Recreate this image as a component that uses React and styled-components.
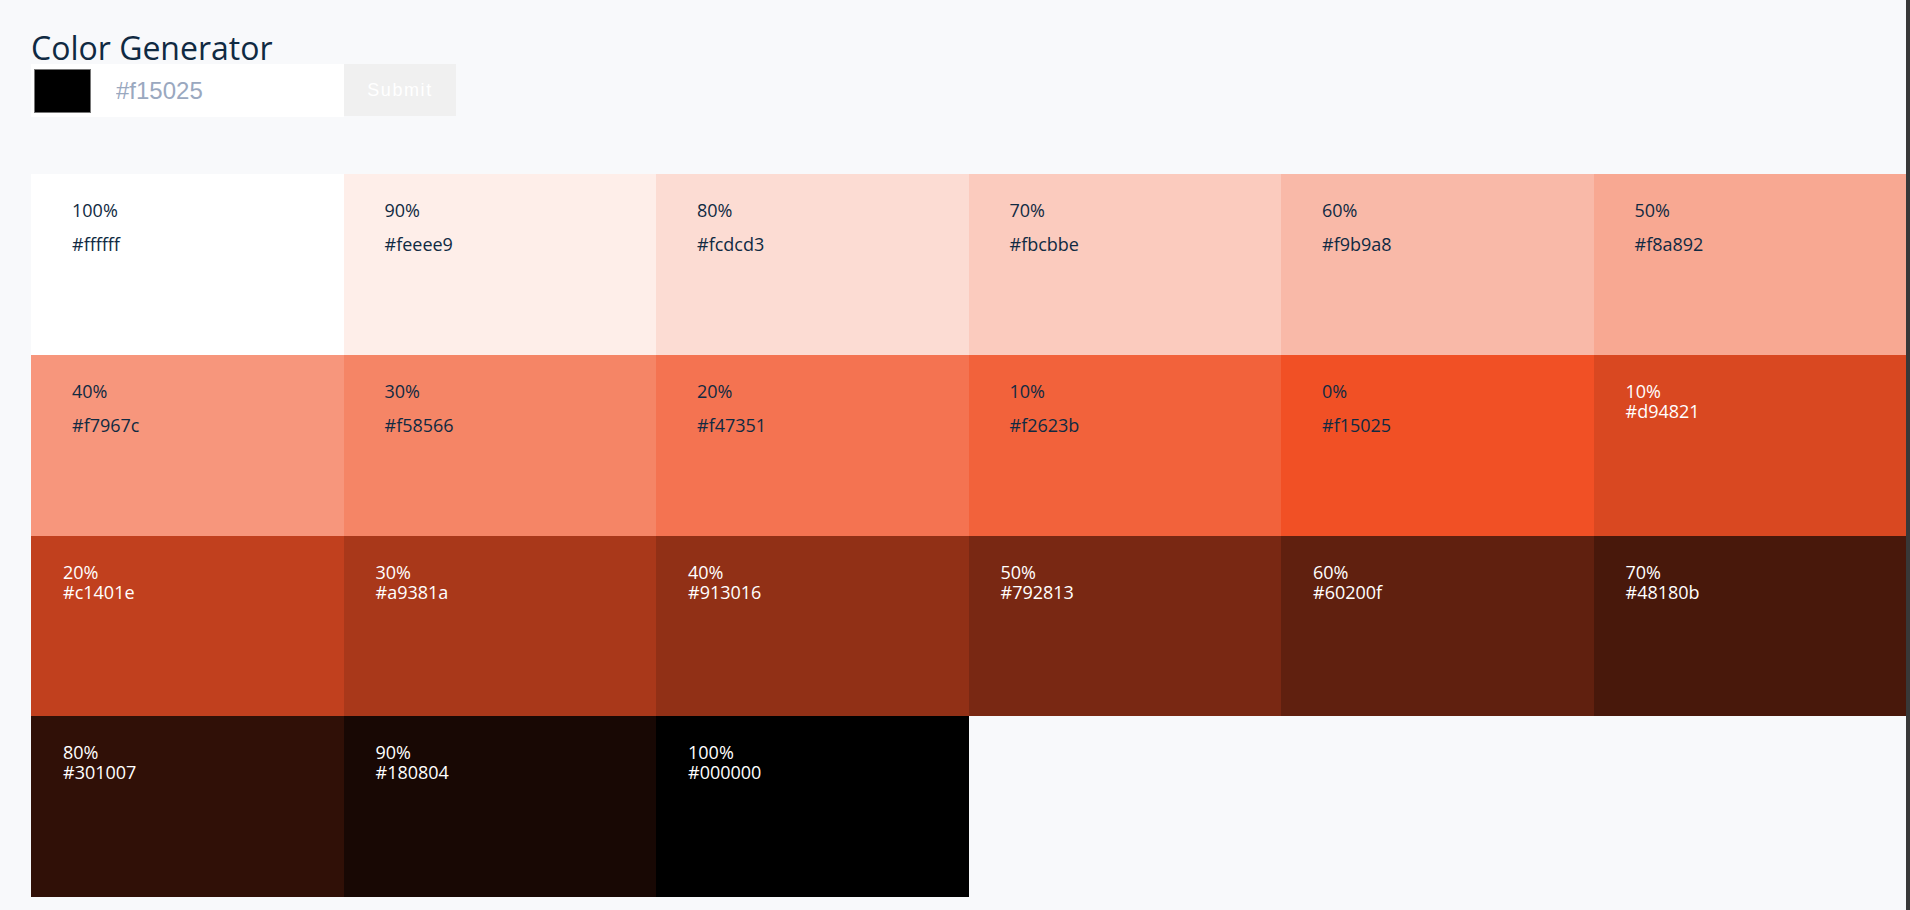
import React from 'react'
import styled, { createGlobalStyle } from 'styled-components'

const GlobalStyle = createGlobalStyle`
  html, body {
    margin: 0;
    padding: 0;
    background: #f8f9fb;
    font-family: "Open Sans", "Noto Sans", sans-serif;
    color: #102a42;
  }
  * { box-sizing: border-box; }
`

const Page = styled.div`
  display: flex;
  height: 910px;
  overflow: hidden;
`

const Main = styled.main`
  flex: 1;
  display: flex;
  flex-direction: column;
  padding: 32px 0 13px 31px;
`

const Edge = styled.div`
  width: 4px;
  background: #383838;
`

const Title = styled.h3`
  margin: 0;
  font-size: 32px;
  line-height: 32px;
  font-weight: 400;
  color: #102a42;
`

const Form = styled.form`
  display: flex;
  align-items: flex-start;
  height: 53px;
  margin-bottom: 57px;
`

const ColorInput = styled.input`
  -webkit-appearance: none;
  appearance: none;
  width: 64px;
  height: 53px;
  padding: 5px 4px 4px 3px;
  margin: 0;
  border: none;
  background: #fff;
  cursor: pointer;

  &::-webkit-color-swatch-wrapper { padding: 0; }
  &::-webkit-color-swatch { border: 1px solid #767676; border-radius: 0; }
`

const TextInput = styled.input`
  width: 249px;
  height: 53px;
  margin: 0;
  padding: 0 0 0 21px;
  border: none;
  outline: none;
  background: #fff;
  font-family: "Liberation Sans", Arial, sans-serif;
  font-size: 24px;
  color: #102a42;

  &::placeholder { color: #9aa8bf; }
`

const Submit = styled.button`
  width: 112px;
  height: 52px;
  margin: 0;
  padding: 0;
  border: none;
  background: #f0f0f0;
  color: #fff;
  font-family: "Liberation Sans", Arial, sans-serif;
  font-size: 18px;
  letter-spacing: 1.6px;
  cursor: pointer;
`

const Grid = styled.section`
  display: grid;
  grid-template-columns: repeat(6, 1fr);
  grid-auto-rows: 180.75px;
`

const Tile = styled.article`
  background: ${p => p.$bg};
  padding: ${p => (p.$dark ? '26px 32px' : '26px 41px')};
  font-size: 18px;
  line-height: 20px;
  color: ${p => (p.$dark ? '#fff' : '#102a42')};
  cursor: pointer;
`

const Percent = styled.p`
  margin: 0 0 ${p => (p.$dark ? '0' : '14px')};
`

const Hex = styled.p`
  margin: 0;
`

const colors = [
  ['100%', '#ffffff'], ['90%', '#feeee9'], ['80%', '#fcdcd3'], ['70%', '#fbcbbe'],
  ['60%', '#f9b9a8'], ['50%', '#f8a892'], ['40%', '#f7967c'], ['30%', '#f58566'],
  ['20%', '#f47351'], ['10%', '#f2623b'], ['0%', '#f15025'], ['10%', '#d94821'],
  ['20%', '#c1401e'], ['30%', '#a9381a'], ['40%', '#913016'], ['50%', '#792813'],
  ['60%', '#60200f'], ['70%', '#48180b'], ['80%', '#301007'], ['90%', '#180804'],
  ['100%', '#000000'],
]

const App = () => (
  <Page>
    <GlobalStyle />
    <Main>
      <Title>Color Generator</Title>
      <Form onSubmit={e => e.preventDefault()}>
        <ColorInput type="color" defaultValue="#000000" />
        <TextInput type="text" placeholder="#f15025" />
        <Submit type="submit">Submit</Submit>
      </Form>
      <Grid>
        {colors.map(([weight, hex], index) => {
          const dark = index > 10
          return (
            <Tile key={index} $bg={hex} $dark={dark}>
              <Percent $dark={dark}>{weight}</Percent>
              <Hex>{hex}</Hex>
            </Tile>
          )
        })}
      </Grid>
    </Main>
    <Edge />
  </Page>
)

export default App
